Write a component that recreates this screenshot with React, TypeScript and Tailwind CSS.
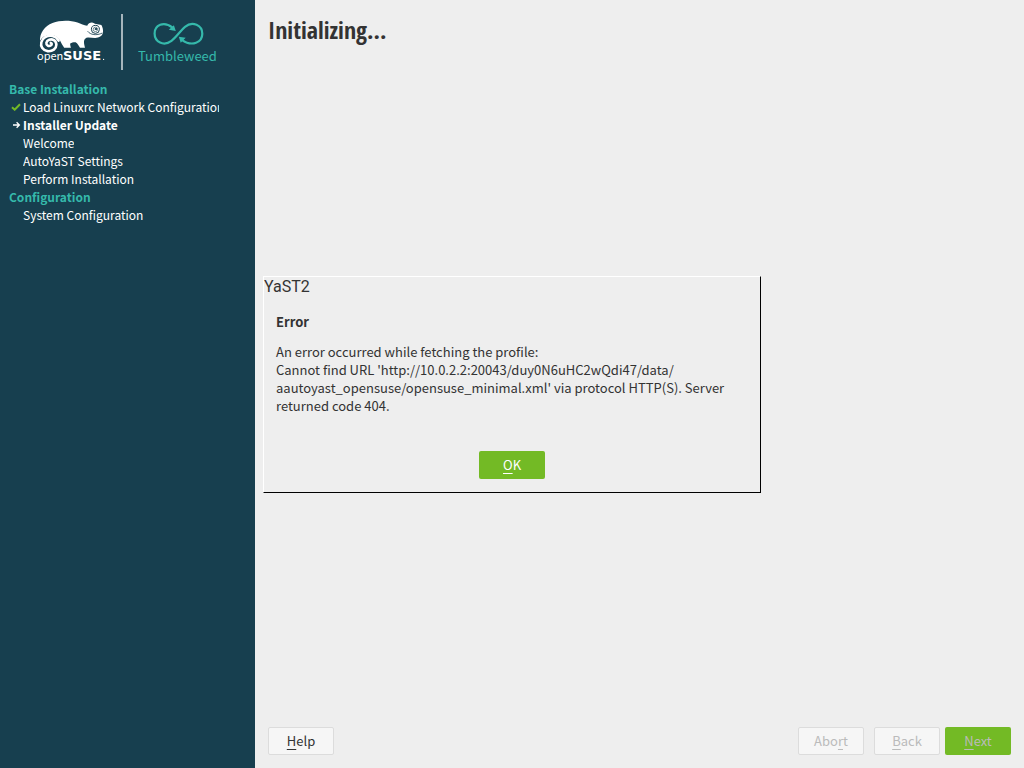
import type { ReactNode } from "react";

const uiFont = "font-['Source_Sans_Pro','Noto_Sans_CJK_SC',sans-serif]";

function Brand() {
  return (
    <svg
      viewBox="30 8 195 66"
      className="ml-[30px] h-[66px] w-[195px]"
      role="img"
      aria-label="openSUSE Tumbleweed"
    >
      <path
        d="M40 41C39.6 33 44.5 26 52.5 22.9C60 20 70 20.1 77.5 22.4C81 23.5 84 25.2 87.2 25.8C88.2 23.5 90 22.4 92 22.5C93.2 22.6 94 23.2 94.8 23.8L101.4 25C102.6 27 103.3 30 103 32.6C102.6 35.2 100.6 37 98 37.6C94.5 38.4 91 37.3 88 37.4C85.6 37.6 84.3 39 84 41.2C83.8 43.5 84.6 45.6 85 47.8L80 47.8C78.8 45.6 77.6 43.4 75.6 42.2C73.6 42 72 42.4 70.2 43.6C70 45 70.5 46.4 71 47.8L64.2 47.8C62.6 45.5 61.2 43.2 60 40.6C57.5 36.3 53.5 34.6 49.5 35C44.8 35.4 41.5 37.6 40 41Z"
        fill="#fff"
      />
      <path
        d="M58.6 40.6C55.8 35.4 49.5 34.7 45.2 37.2C41.2 39.6 39.9 44.6 42.3 48.1C44.6 51.5 50.2 52.2 53.8 49.6C57.2 47 57.2 42.3 53.9 40.2C51 38.5 47 39.8 46.4 42.7C46 45.4 48.9 46.9 51 45.3C52.1 44.4 51.9 43.2 50.8 42.9"
        fill="none"
        stroke="#fff"
        strokeWidth="2.6"
        strokeLinecap="round"
      />
      <circle cx="95.4" cy="29.4" r="4" fill="none" stroke="#173f4f" strokeWidth="1" />
      <circle cx="95.4" cy="29.4" r="2.2" fill="none" stroke="#173f4f" strokeWidth="0.6" />
      <ellipse cx="96" cy="29" rx="1.4" ry="0.9" fill="#173f4f" />
      <path d="M87.6 31.2C90.5 35 96.5 35.8 102.4 33" fill="none" stroke="#173f4f" strokeWidth="0.8" />
      <text x="37" y="60" fill="#fff" fontSize="11" className={uiFont}>open</text>
      <text x="63" y="60" fill="#fff" fontSize="13" fontWeight="700" className="font-['DejaVu_Sans',sans-serif]">
        SUSE
      </text>
      <circle cx="103.6" cy="59.4" r="0.6" fill="#fff" />
      <rect x="121" y="14" width="2" height="56" fill="#a6b5bc" />
      <path
        d="M172.5 27.6C163.5 20.5 154.6 25.3 154.6 33.5C154.6 41.8 163.5 46.8 171.5 40.8C177 36.5 180.5 30.5 185 26.8C192.7 20.5 202.3 25.5 202.3 33.7C202.3 42 192.5 47.4 181.8 39.8"
        fill="none"
        stroke="#35b9ab"
        strokeWidth="2.2"
      />
      <path d="M175.8 31L168.8 29.8L173.9 25.2ZM178.8 36.8L185.7 37.8L180.7 42.7Z" fill="#35b9ab" />
      <text x="138" y="61" fill="#35b9ab" fontSize="13" className={uiFont}>Tumbleweed</text>
    </svg>
  );
}

function Check() {
  return (
    <svg viewBox="0 0 10 8" className="h-2 w-2.5" aria-hidden="true">
      <path d="M1 4.2L3.7 6.7L9 1.2" fill="none" stroke="#73ba25" strokeWidth="2" />
    </svg>
  );
}

function Arrow() {
  return (
    <svg viewBox="0 0 10 8" className="h-2 w-2.5" aria-hidden="true">
      <path d="M2 4H8M5.6 1.2L8.4 4L5.6 6.8" fill="none" stroke="#fff" strokeWidth="1.3" />
    </svg>
  );
}

function Section({ title, children }: { title: string; children: ReactNode }) {
  return (
    <section>
      <h2 className="font-bold text-[#35b9ab]">{title}</h2>
      <ul>{children}</ul>
    </section>
  );
}

function Step({ label, icon, current = false }: { label: string; icon?: ReactNode; current?: boolean }) {
  return (
    <li className={current ? "flex font-bold" : "flex"} aria-current={current ? "step" : undefined}>
      <span className="flex w-3.5 shrink-0 items-center pl-0.5">{icon}</span>
      <span className="overflow-hidden whitespace-nowrap">{label}</span>
    </li>
  );
}

const buttonBase = "flex h-7 w-[66px] items-center justify-center rounded-xs leading-[18px]";
const plain = "border border-[#dcdcdc] bg-[#f6f6f6]";

function Key({ children }: { children: string }) {
  return <span className="underline decoration-1 underline-offset-3">{children}</span>;
}

export default function App() {
  return (
    <div className={`flex min-h-screen bg-[#eee] text-[13px] leading-[18px] text-[#333] ${uiFont}`}>
      <aside className="w-[255px] shrink-0 bg-[#173f4f] pt-2 text-white">
        <Brand />
        <nav aria-label="Installation steps" className="mr-9 ml-[9px] pt-1.5 text-xs leading-[18px]">
          <Section title="Base Installation">
            <Step label="Load Linuxrc Network Configuration" icon={<Check />} />
            <Step label="Installer Update" icon={<Arrow />} current />
            <Step label="Welcome" />
            <Step label="AutoYaST Settings" />
            <Step label="Perform Installation" />
          </Section>
          <Section title="Configuration">
            <Step label="System Configuration" />
          </Section>
        </nav>
      </aside>

      <main className="flex grow flex-col justify-between px-[13px] pt-3 pb-[13px]">
        <h1 className="font-['Open_Sans_Condensed','Noto_Sans_CJK_SC',sans-serif] text-2xl leading-9 font-bold">
          Initializing...
        </h1>
        <footer className="flex justify-between">
          <button type="button" className={`${buttonBase} ${plain}`}>
            <Key>H</Key>elp
          </button>
          <div className="flex">
            <button type="button" disabled className={`${buttonBase} ${plain} mr-2.5 text-[#bbb]`}>
              Abo<Key>r</Key>t
            </button>
            <button type="button" disabled className={`${buttonBase} ${plain} mr-[5px] text-[#bbb]`}>
              <Key>B</Key>ack
            </button>
            <button type="button" disabled className={`${buttonBase} bg-[#73ba25] text-[#bbb]`}>
              <Key>N</Key>ext
            </button>
          </div>
        </footer>
      </main>

      <div className="fixed inset-0 flex items-center justify-center">
        <div
          role="alertdialog"
          aria-labelledby="dialog-title"
          aria-describedby="dialog-message"
          className="w-[498px] border border-t-white border-r-black border-b-black border-l-white bg-[#eee]"
        >
          <h2 id="dialog-title" className="font-[Roboto,sans-serif] text-base leading-5">
            YaST2
          </h2>
          <div className="px-3 pt-4 pb-[13px]">
            <h3 className="font-bold">Error</h3>
            <p id="dialog-message" className="pt-3">
              An error occurred while fetching the profile:
              <br />
              Cannot find URL 'http://10.0.2.2:20043/duy0N6uHC2wQdi47/data/
              <br />
              aautoyast_opensuse/opensuse_minimal.xml' via protocol HTTP(S). Server
              <br />
              returned code 404.
            </p>
            <div className="flex justify-center pt-9">
              <button type="button" className={`${buttonBase} bg-[#73ba25] text-white`}>
                <Key>O</Key>K
              </button>
            </div>
          </div>
        </div>
      </div>
    </div>
  );
}
